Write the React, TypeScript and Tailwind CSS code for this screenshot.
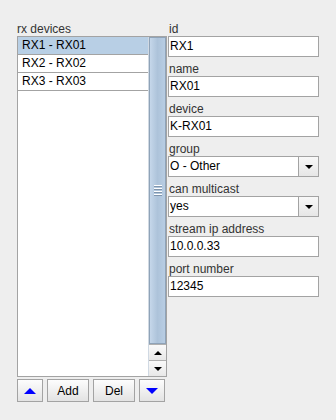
const font = { fontFamily: '"Liberation Sans", Arial, sans-serif' };

const fields: { label: string; value: string; combo?: boolean }[] = [
  { label: "id", value: "RX1" },
  { label: "name", value: "RX01" },
  { label: "device", value: "K-RX01" },
  { label: "group", value: "O - Other", combo: true },
  { label: "can multicast", value: "yes", combo: true },
  { label: "stream ip address", value: "10.0.0.33" },
  { label: "port number", value: "12345" },
];

const devices = ["RX1 - RX01", "RX2 - RX02", "RX3 - RX03"];

function DownTri({ className }: { className: string }) {
  return (
    <svg width="8" height="4" viewBox="0 0 8 4" className={className}>
      <path d="M0 0H8L4 4Z" fill="currentColor" />
    </svg>
  );
}

function UpTri({ className }: { className: string }) {
  return (
    <svg width="8" height="4" viewBox="0 0 8 4" className={className}>
      <path d="M0 4H8L4 0Z" fill="currentColor" />
    </svg>
  );
}

function Field({ label, value, combo }: { label: string; value: string; combo?: boolean }) {
  return (
    <div className="flex flex-col h-[40px]">
      <div className="h-[16px] pt-[1px] leading-[16px] text-[12px] text-[#333333] pl-[1px]">{label}</div>
      {combo ? (
        <div className="h-[21px] flex border border-[#a3a3a3] bg-white">
          <div className="flex-1 pl-[1px] leading-[19px] text-[12px] text-black">{value}</div>
          <div className="w-[20px] border-l border-[#a3a3a3] bg-gradient-to-b from-[#f8f8f8] to-[#e6e6e6] flex items-center justify-center">
            <DownTri className="text-black" />
          </div>
        </div>
      ) : (
        <div className="h-[21px] border border-[#a3a3a3] bg-white pl-[1px] leading-[19px] text-[12px] text-black">
          {value}
        </div>
      )}
    </div>
  );
}

function Btn({ children, w }: { children: React.ReactNode; w: string }) {
  return (
    <div
      className={`${w} h-[23px] border border-[#a3a3a3] bg-gradient-to-b from-[#fdfdfd] to-[#e3e3e3] flex items-center justify-center text-[12px] text-black`}
    >
      {children}
    </div>
  );
}

export default function App() {
  return (
    <div className="w-[336px] h-[420px] bg-[#eeeeee] flex pt-[20px] pl-[17px]" style={font}>
      {/* device list */}
      <div className="w-[150px] flex flex-col">
        <div className="h-[16px] pt-[1px] leading-[16px] text-[12px] text-[#333333]">rx devices</div>
        <div className="h-[341px] border border-[#a3a3a3] bg-white flex">
          <div className="flex-1 flex flex-col">
            {devices.map((d, i) => (
              <div
                key={d}
                className={`h-[18px] border-b border-[#a3a3a3] pl-[4px] leading-[17px] text-[12px] text-black ${
                  i === 0 ? "bg-[#b8cfe5]" : "bg-white"
                }`}
              >
                {d}
              </div>
            ))}
          </div>
          <div className="w-[18px] flex flex-col border-l border-[#d0d9e3] bg-[#eeeeee]">
            <div className="flex-1 border border-[#8fa3b8] bg-gradient-to-r from-[#c5d7ea] via-[#adc3da] to-[#b8cde3] flex flex-col items-center justify-center">
              {[0, 1, 2, 3].map((k) => (
                <div key={k} className="w-[8px] h-[3px] flex flex-col">
                  <div className="h-[1px] bg-white" />
                  <div className="h-[1px] bg-[#7f95ad]" />
                </div>
              ))}
            </div>
            <div className="h-[16px] border-t border-[#b0b0b0] bg-gradient-to-b from-[#fafafa] to-[#e8e8e8] flex items-center justify-center">
              <UpTri className="text-black" />
            </div>
            <div className="h-[16px] border-t border-[#b0b0b0] bg-gradient-to-b from-[#fafafa] to-[#e8e8e8] flex items-center justify-center">
              <DownTri className="text-black" />
            </div>
          </div>
        </div>
        <div className="mt-[2px] flex gap-[4px]">
          <Btn w="w-[26px]">
            <svg width="12" height="6" viewBox="0 0 12 6">
              <path d="M0 6H12L6 0Z" fill="#0000ff" />
            </svg>
          </Btn>
          <Btn w="w-[42px]">Add</Btn>
          <Btn w="w-[42px]">Del</Btn>
          <Btn w="w-[26px]">
            <svg width="12" height="6" viewBox="0 0 12 6">
              <path d="M0 0H12L6 6Z" fill="#0000ff" />
            </svg>
          </Btn>
        </div>
      </div>

      {/* detail fields */}
      <div className="ml-[1px] w-[151px] flex flex-col">
        {fields.map((f) => (
          <Field key={f.label} {...f} />
        ))}
      </div>
    </div>
  );
}
